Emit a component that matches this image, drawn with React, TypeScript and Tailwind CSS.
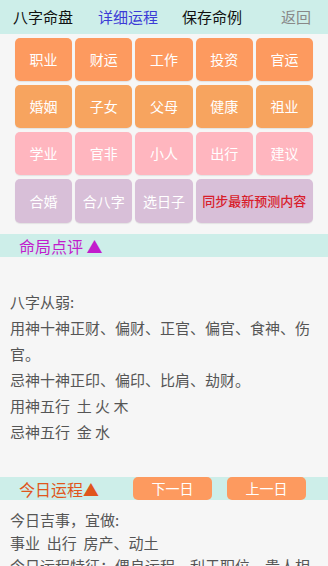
const font = { fontFamily: '"Noto Sans CJK SC", "Noto Sans", sans-serif' };

const rows: { label: string; cls: string }[][] = [
  ["职业", "财运", "工作", "投资", "官运"].map((l) => ({ label: l, cls: "bg-[#fd9a5f]" })),
  ["婚姻", "子女", "父母", "健康", "祖业"].map((l) => ({ label: l, cls: "bg-[#f7a45f]" })),
  ["学业", "官非", "小人", "出行", "建议"].map((l) => ({ label: l, cls: "bg-[#ffb6bf]" })),
];

const mingju = [
  "八字从弱:",
  "用神十神正财、偏财、正官、偏官、食神、伤官。",
  "忌神十神正印、偏印、比肩、劫财。",
  "用神五行  土 火 木",
  "忌神五行  金 水",
];

export default function App() {
  return (
    <div className="w-[328px] h-[566px] overflow-hidden bg-[#f6f6f6]" style={font}>
      {/* 顶部导航 */}
      <div className="h-[34px] bg-[#cdeee9] flex items-center text-[15px] pl-[13px]">
        <span className="text-[#111]">八字命盘</span>
        <span className="ml-[25px] text-[#3b3bd6]">详细运程</span>
        <span className="ml-[24px] text-[#111]">保存命例</span>
        <span className="ml-[39px] text-[#888]">返回</span>
      </div>

      {/* 按钮区 */}
      <div className="px-[15px] pt-[4px] flex flex-col gap-[4px]">
        {rows.map((row, i) => (
          <div key={i} className="grid grid-cols-5 gap-[3px]">
            {row.map((b) => (
              <div
                key={b.label}
                className={`${b.cls} h-[43px] rounded-[5px] flex items-center justify-center text-white text-[14px] shadow-[0_1px_1px_rgba(0,0,0,0.08)]`}
              >
                {b.label}
              </div>
            ))}
          </div>
        ))}
        <div className="grid grid-cols-5 gap-[3px]">
          {["合婚", "合八字", "选日子"].map((l) => (
            <div
              key={l}
              className="bg-[#d8bfd8] h-[44px] rounded-[5px] flex items-center justify-center text-white text-[14px] shadow-[0_1px_1px_rgba(0,0,0,0.08)]"
            >
              {l}
            </div>
          ))}
          <div className="col-span-2 bg-[#d8bfd8] h-[44px] rounded-[5px] flex items-center justify-center text-[#d81e2c] text-[13px] font-medium shadow-[0_1px_1px_rgba(0,0,0,0.08)]">
            同步最新预测内容
          </div>
        </div>
      </div>

      {/* 命局点评 */}
      <div className="mt-[11px] h-[23px] bg-[#cdeee9] flex items-center pl-[19px] text-[16px] text-[#c21ccc]">
        命局点评 ▲
      </div>
      <div className="px-[10px] pt-[32px] pb-[32px] text-[15px] leading-[26px] text-[#555] whitespace-pre-wrap">
        {mingju.map((t) => (
          <div key={t}>{t}</div>
        ))}
      </div>

      {/* 今日运程 */}
      <div className="h-[23px] bg-[#cdeee9] flex items-center pl-[19px]">
        <span className="text-[16px] text-[#e0561c] w-[114px]">今日运程▲</span>
        <div className="w-[79px] h-[23px] rounded-[5px] bg-[#fd9a5f] text-white text-[14px] flex items-center justify-center">
          下一日
        </div>
        <div className="ml-[15px] w-[79px] h-[23px] rounded-[5px] bg-[#fd9a5f] text-white text-[14px] flex items-center justify-center">
          上一日
        </div>
      </div>
      <div className="px-[10px] pt-[8px] text-[15px] leading-[23px] text-[#555] whitespace-pre-wrap">
        <div>今日吉事，宜做:</div>
        <div>事业  出行  房产、动土</div>
        <div>今日运程特征：偶良运程，利于职位、贵人相助</div>
      </div>
    </div>
  );
}
